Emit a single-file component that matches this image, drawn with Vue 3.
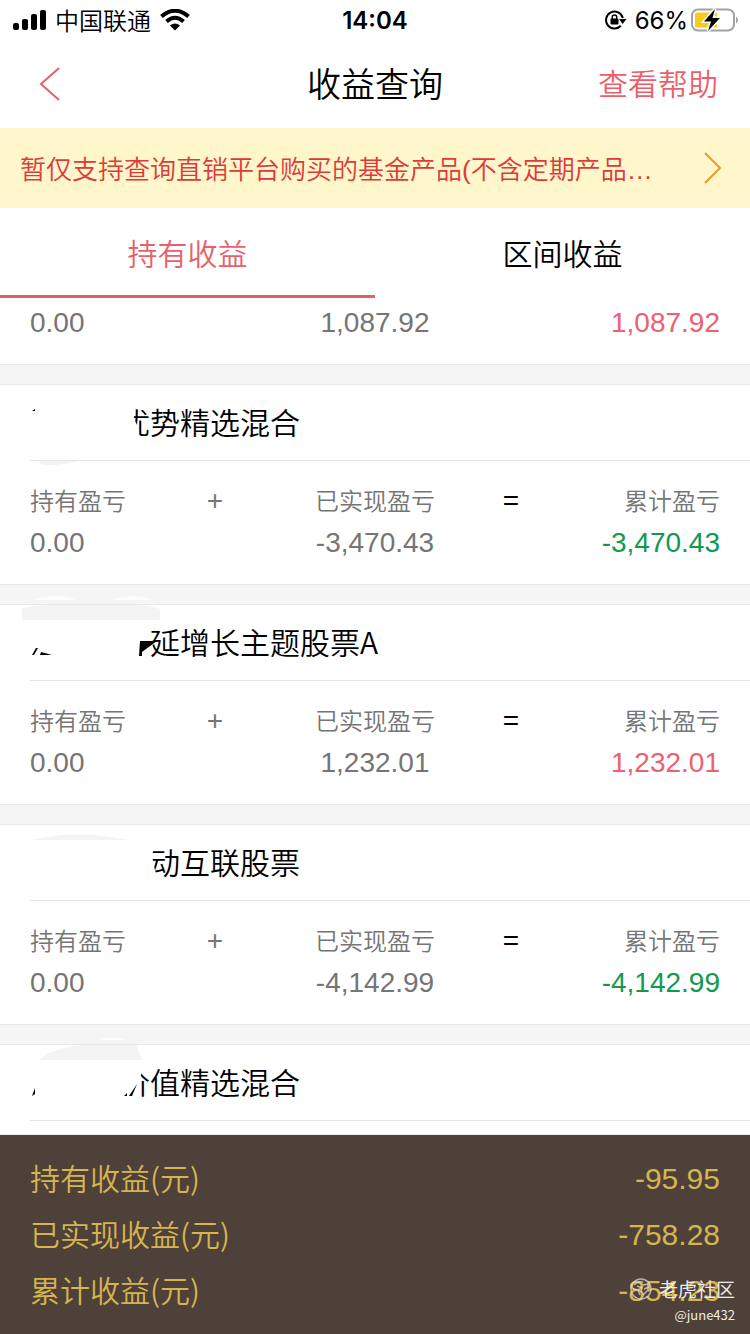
<script setup>
const cards = [
  {
    name: '优势精选混合',
    hidden: 3,
    realized: '-3,470.43',
    total: '-3,470.43',
    cover: 'M95 20H134V34L137 40V66H95Z',
    marks: 'M32 26L35 24V26Z',
    haze: 'M40 76V79Q54 82 80 76Z',
  },
  {
    name: '延增长主题股票A',
    hidden: 4,
    realized: '1,232.01',
    total: '1,232.01',
    cover: 'M95 20H140V66H95Z',
    marks: 'M32 50L36 43H38L34 50ZM40 50L41 47L52 50ZM140 36H157L142 47V51H139Z',
    haze: 'M22 15V3Q36 0 50 0H138Q150 1 160 4V15Z',
    gleam: 'M32 -5Q58 -13 76 -5ZM112 -5Q134 -13 152 -5Z',
  },
  {
    name: '动互联股票',
    hidden: 4,
    realized: '-4,142.99',
    total: '-4,142.99',
    cover: 'M95 20H152L153 38L157 52V66H95Z',
    haze: 'M32 15Q78 4 128 15Z',
  },
  {
    name: '价值精选混合',
    hidden: 3,
    cover: 'M95 18H144L140 34L137 40L139 66H95Z',
    marks: 'M32 51L35 43V49ZM124 51L127 48V51ZM129 51L137 39L132 51Z',
    haze: 'M40 15Q52 2 86 0H136L142 15Z',
    gleam: 'M98 -5Q114 -10 126 -5Z',
  },
]

const totals = [
  { label: '持有收益(元)', value: '-95.95' },
  { label: '已实现收益(元)', value: '-758.28' },
  { label: '累计收益(元)', value: '-854.23' },
]

const tone = (v) => (v.startsWith('-') ? 'down' : 'up')
</script>

<template>
  <div class="page">
    <div class="status">
      <div class="side">
        <svg width="34" height="22" viewBox="0 0 34 22" aria-hidden="true">
          <rect x="1" y="14" width="6" height="7" rx="2" />
          <rect x="10" y="10" width="6" height="11" rx="2" />
          <rect x="19" y="5" width="6" height="16" rx="2" />
          <rect x="28" y="1" width="6" height="20" rx="2" />
        </svg>
        <span class="carrier">中国联通</span>
        <svg width="30" height="22" viewBox="0 0 30 22" fill="none" stroke="#000" aria-hidden="true">
          <path d="M1.500 7.500Q15 -4 28.500 7.500" stroke-width="4" />
          <path d="M6.500 12.500Q15 5 23.500 12.500" stroke-width="4" />
          <path d="M10 16.500Q15 12.500 20 16.500L15 21.500Z" fill="#000" stroke="none" />
        </svg>
      </div>
      <span class="time">14:04</span>
      <div class="side right">
        <svg width="22" height="20" viewBox="0 0 22 20" aria-hidden="true">
          <path d="M15.800 15.800A8.500 8.500 0 1 1 17.800 8" fill="none" stroke="#000" stroke-width="2" />
          <path d="M14 9H21.500L17.700 14Z" />
          <rect x="5.500" y="8.500" width="8" height="6" rx="1" />
          <path d="M7.300 9V7Q7.300 5 9.500 5T11.700 7V9" fill="none" stroke="#000" stroke-width="1.500" />
        </svg>
        <span class="percent">66%</span>
        <svg width="48" height="24" viewBox="0 0 48 24" aria-hidden="true">
          <rect x="2" y="1.500" width="42" height="21" rx="6" fill="#fff" stroke="#a2a2a2" stroke-width="2" />
          <path d="M7 4.500H27V19.500H7Q5 19.500 5 17.500V6.500Q5 4.500 7 4.500Z" fill="#fbcb1c" />
          <path d="M46 8.500Q48 10 48 12T46 15.500Z" fill="#a2a2a2" />
          <path d="M25 1L14 13.500H21L18 23L30 10H22.500Z" stroke="#fff" stroke-width="3" paint-order="stroke" />
        </svg>
      </div>
    </div>

    <header class="nav">
      <button class="back" aria-label="返回">
        <svg width="22" height="34" viewBox="0 0 22 34" fill="none" stroke="#ea5f6c" stroke-width="2">
          <path d="M20 1L2 17L20 33" />
        </svg>
      </button>
      <h1>收益查询</h1>
      <a class="help" href="#help">查看帮助</a>
    </header>

    <a class="notice" href="#notice">
      <span>暂仅支持查询直销平台购买的基金产品(不含定期产品…</span>
      <svg width="18" height="32" viewBox="0 0 18 32" fill="none" stroke="#ea9a2a" stroke-width="2" aria-hidden="true">
        <path d="M1 1L16 16L1 31" />
      </svg>
    </a>

    <nav class="tabs">
      <button class="tab active">持有收益</button>
      <button class="tab">区间收益</button>
    </nav>

    <main class="list">
      <section class="card partial">
        <div class="figures">
          <span class="value first">0.00</span>
          <span class="value mid">1,087.92</span>
          <span class="value last up">1,087.92</span>
        </div>
      </section>

      <section v-for="card in cards" :key="card.name" class="card">
        <h2 :style="{ paddingLeft: card.hidden + 'em' }">{{ card.name }}</h2>
        <svg class="smudge" width="200" height="112" viewBox="0 -24 200 112" aria-hidden="true">
          <path :d="card.haze" fill="#f4f4f4" />
          <path v-if="card.gleam" :d="card.gleam" fill="#fcfcfc" />
          <path :d="card.cover" fill="#fff" />
          <path v-if="card.marks" :d="card.marks" fill="#000" />
        </svg>
        <div v-if="card.total" class="figures">
          <span class="label first">持有盈亏</span>
          <span class="sign">+</span>
          <span class="label mid">已实现盈亏</span>
          <span class="sign equals">=</span>
          <span class="label last">累计盈亏</span>
          <span class="value first">0.00</span>
          <span class="value mid">{{ card.realized }}</span>
          <span class="value last" :class="tone(card.total)">{{ card.total }}</span>
        </div>
      </section>
    </main>

    <footer class="totals">
      <div v-for="row in totals" :key="row.label" class="total">
        <span class="caption">{{ row.label }}</span>
        <span>{{ row.value }}</span>
      </div>
      <div class="watermark">
        <div class="brand">
          <svg width="24" height="24" viewBox="0 0 24 24" fill="none" stroke="#e4dfdc" stroke-opacity="0.7" aria-hidden="true">
            <circle cx="12" cy="12" r="10" stroke-width="1.500" />
            <path d="M5 8Q9 4 14 5M4 12L9 13L11 18M8 9L13 11L12 15M14 8L19 7M15 12L20 10M14 18L18 14" stroke-width="1.500" />
          </svg>
          <span>老虎社区</span>
        </div>
        <span class="user">@june432</span>
      </div>
    </footer>
  </div>
</template>

<style>
body {
  margin: 0;
  background: #fff;
}
</style>

<style scoped>
.page {
  display: flex;
  flex-direction: column;
  height: 100vh;
  overflow: hidden;
  background: #fff;
  color: #000;
  font-family: "Liberation Sans", "Noto Sans CJK SC", sans-serif;
  font-weight: 350;
}
button {
  padding: 0;
  border: 0;
  background: none;
  font: inherit;
  color: inherit;
}
a {
  color: inherit;
  text-decoration: none;
}
h1,
h2 {
  margin: 0;
  font-weight: inherit;
}
.status {
  display: grid;
  grid-template-columns: 1fr auto 1fr;
  align-items: center;
  height: 40px;
  padding: 0 12px;
  font-family: Inter, "Noto Sans CJK SC", sans-serif;
  font-size: 24px;
  font-weight: 400;
}
.side {
  display: flex;
  align-items: center;
  gap: 9px;
}
.carrier {
  font-family: "Noto Sans CJK SC", sans-serif;
  font-weight: 350;
  line-height: 36px;
}
.side.right {
  justify-content: flex-end;
  gap: 8px;
}
.percent {
  margin-right: -6px;
}
.time {
  font-weight: 600;
}
.nav {
  display: grid;
  grid-template-columns: 1fr auto 1fr;
  align-items: center;
  height: 84px;
  padding: 0 32px 4px;
}
.back {
  display: flex;
  justify-self: start;
  padding: 4px 7px 0;
}
.nav h1 {
  font-size: 34px;
}
.help {
  justify-self: end;
  color: #ea5f6c;
  font-size: 30px;
}
.notice {
  display: flex;
  align-items: center;
  justify-content: space-between;
  height: 80px;
  padding: 0 28px 0 20px;
  background: #fff6cb;
  color: #dc3b3a;
  font-size: 26px;
}
.notice span {
  padding-bottom: 2px;
}
.tabs {
  display: flex;
  height: 90px;
}
.tab {
  flex: 1;
  border-bottom: 3px solid transparent;
  font-size: 30px;
}
.tab.active {
  border-color: #e0606a;
  color: #ea5f6c;
}
.list {
  display: flex;
  flex: 1;
  flex-direction: column;
  gap: 19px;
  min-height: 0;
  overflow: hidden;
  background: #f5f5f5;
}
.card {
  position: relative;
  flex: none;
  border-top: 1px solid #e8e8e8;
  border-bottom: 1px solid #e8e8e8;
  background: #fff;
}
.card:last-child {
  flex: 1 0 auto;
}
.card h2 {
  height: 75px;
  margin-left: 30px;
  border-bottom: 1px solid #e6e6e6;
  font-family: "Noto Sans CJK SC", sans-serif;
  font-size: 30px;
  line-height: 72px;
}
.smudge {
  position: absolute;
  top: -24px;
  left: 0;
}
.figures {
  display: grid;
  grid-template-columns: 147fr 76fr 244fr 28fr 195fr;
  grid-auto-rows: 41px;
  align-items: center;
  padding: 20px 30px 21px;
  color: #757575;
}
.partial {
  border-top: 0;
}
.partial .figures {
  padding: 4px 30px 21px;
}
.label {
  padding-bottom: 4px;
  font-size: 24px;
}
.value {
  font-size: 28px;
}
.first {
  grid-column: 1;
}
.mid {
  grid-column: 3;
  text-align: center;
}
.last {
  grid-column: 5;
  text-align: right;
}
.sign {
  padding-bottom: 2px;
  font-size: 28px;
  text-align: center;
}
.equals {
  color: #000;
}
.up {
  color: #ee6070;
}
.down {
  color: #109a50;
}
.totals {
  position: relative;
  flex: none;
  padding: 16px 30px 15px;
  background: #4e413a;
  color: #d6b450;
  font-size: 30px;
  line-height: 56px;
}
.total {
  display: flex;
  justify-content: space-between;
}
.caption {
  font-family: "Noto Sans CJK SC", sans-serif;
  line-height: 52px;
}
.watermark {
  position: absolute;
  right: 15px;
  bottom: 9px;
  color: #efebe9;
  font-family: "Noto Sans CJK SC", sans-serif;
  font-weight: 400;
  text-align: right;
}
.brand {
  display: flex;
  align-items: center;
  gap: 6px;
  font-size: 19px;
  line-height: 32px;
}
.user {
  display: block;
  font-size: 13px;
  line-height: 20px;
}
</style>
